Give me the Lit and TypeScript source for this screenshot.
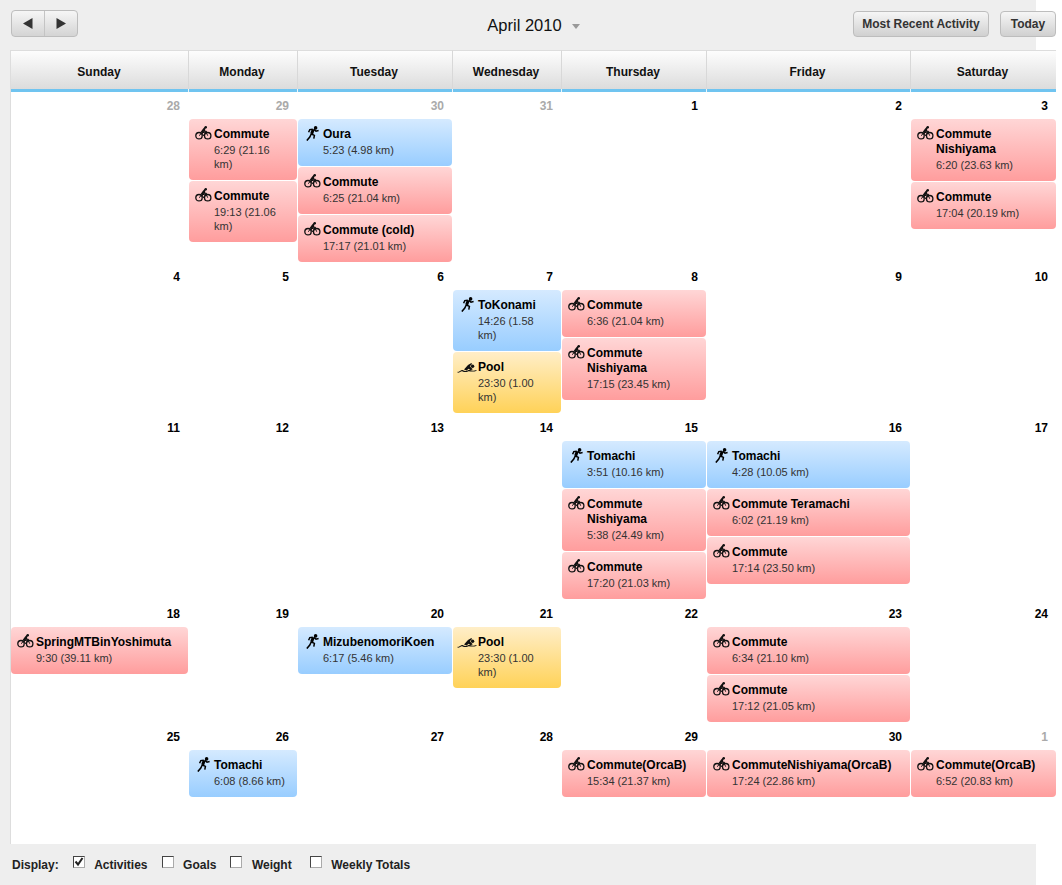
import { LitElement, html, css, svg } from "lit";
import { customElement } from "lit/decorators.js";

type Kind = "bike" | "run" | "swim";
interface Ev { k: Kind; t: string; s: string }
interface Day { n: number; off?: boolean; ev?: Ev[] }

const b = (t: string, s: string): Ev => ({ k: "bike", t, s });
const r = (t: string, s: string): Ev => ({ k: "run", t, s });
const p = (t: string, s: string): Ev => ({ k: "swim", t, s });

const WEEKS: Day[][] = [
  [
    { n: 28, off: true },
    { n: 29, off: true, ev: [b("Commute", "6:29 (21.16 km)"), b("Commute", "19:13 (21.06 km)")] },
    { n: 30, off: true, ev: [r("Oura", "5:23 (4.98 km)"), b("Commute", "6:25 (21.04 km)"), b("Commute (cold)", "17:17 (21.01 km)")] },
    { n: 31, off: true },
    { n: 1 },
    { n: 2 },
    { n: 3, ev: [b("Commute Nishiyama", "6:20 (23.63 km)"), b("Commute", "17:04 (20.19 km)")] },
  ],
  [
    { n: 4 },
    { n: 5 },
    { n: 6 },
    { n: 7, ev: [r("ToKonami", "14:26 (1.58 km)"), p("Pool", "23:30 (1.00 km)")] },
    { n: 8, ev: [b("Commute", "6:36 (21.04 km)"), b("Commute Nishiyama", "17:15 (23.45 km)")] },
    { n: 9 },
    { n: 10 },
  ],
  [
    { n: 11 },
    { n: 12 },
    { n: 13 },
    { n: 14 },
    { n: 15, ev: [r("Tomachi", "3:51 (10.16 km)"), b("Commute Nishiyama", "5:38 (24.49 km)"), b("Commute", "17:20 (21.03 km)")] },
    { n: 16, ev: [r("Tomachi", "4:28 (10.05 km)"), b("Commute Teramachi", "6:02 (21.19 km)"), b("Commute", "17:14 (23.50 km)")] },
    { n: 17 },
  ],
  [
    { n: 18, ev: [b("SpringMTBinYoshimuta", "9:30 (39.11 km)")] },
    { n: 19 },
    { n: 20, ev: [r("MizubenomoriKoen", "6:17 (5.46 km)")] },
    { n: 21, ev: [p("Pool", "23:30 (1.00 km)")] },
    { n: 22 },
    { n: 23, ev: [b("Commute", "6:34 (21.10 km)"), b("Commute", "17:12 (21.05 km)")] },
    { n: 24 },
  ],
  [
    { n: 25 },
    { n: 26, ev: [r("Tomachi", "6:08 (8.66 km)")] },
    { n: 27 },
    { n: 28 },
    { n: 29, ev: [b("Commute(OrcaB)", "15:34 (21.37 km)")] },
    { n: 30, ev: [b("CommuteNishiyama(OrcaB)", "17:24 (22.86 km)")] },
    { n: 1, off: true, ev: [b("Commute(OrcaB)", "6:52 (20.83 km)")] },
  ],
];

const DAYS = ["Sunday", "Monday", "Tuesday", "Wednesday", "Thursday", "Friday", "Saturday"];
const DISPLAY = [
  { label: "Activities", on: true },
  { label: "Goals", on: false },
  { label: "Weight", on: false },
  { label: "Weekly Totals", on: false },
];

const icons = {
  bike: svg`<svg class="ic bike" width="17" height="14" viewBox="0 0 17 14">
    <circle cx="4" cy="9.7" r="3.2" fill="none" stroke="#111" stroke-width="1.3"/>
    <circle cx="12.7" cy="9.7" r="3.2" fill="none" stroke="#111" stroke-width="1.3"/>
    <path d="M4 9.7 L7 6.8 L11 6 L12.7 9.7 M7 6.8 L8.4 9.8 L11 6" fill="none" stroke="#111" stroke-width="1"/>
    <path d="M5.6 6 L7.8 3 L10 .6 L11.4 1.2 L10.2 3 L10 4.4 L12 5 L11.8 6.1 L8.8 5.8 L7.4 7.2 Z" fill="#111"/>
    <circle cx="10.8" cy="1.2" r="1.2" fill="#111"/>
  </svg>`,
  run: svg`<svg class="ic run" width="13" height="15" viewBox="0 0 13 15">
    <circle cx="9.6" cy="1.9" r="1.8" fill="#000"/>
    <path d="M7.2 3.4 L5.6 8" fill="none" stroke="#000" stroke-width="3"/>
    <path d="M7.6 3.2 L10 5.2 L12.6 4.6 M6.8 3.2 L3.8 3.6 L2.6 6.2 M5.2 8 L3.8 11 L0.8 14.6 M5.4 8 L8.4 9.4 L7.8 12.6" fill="none" stroke="#000" stroke-width="1.5"/>
  </svg>`,
  swim: svg`<svg class="ic swim" width="20" height="10" viewBox="0 0 20 10">
    <circle cx="15.6" cy="3.2" r="1.7" fill="#111"/>
    <path d="M7 6.6 L11 2 L14.4 0 L15 1 L12.8 3.2 L15.8 6.2 L13.6 7.2 L11.6 5.8 L9.6 7.4 Z" fill="#111"/>
    <path d="M0.5 8.8 C2.5 9.4 4 6.2 6 7.2 C8 8.4 9.6 7.8 11 7.2 C13 6.6 15 8.8 19.5 7 L19.5 7.8 C15 9.6 13 7.8 11 8.4 C9 9.2 7.6 9.4 5.6 8.4 C4 7.6 2.6 10 0.5 9.6 Z" fill="#111"/>
  </svg>`,
};

@customElement("app-root")
export class AppRoot extends LitElement {
  static styles = css`
    :host {
      display: flex;
      flex-direction: column;
      width: 1062px;
      height: 885px;
      background: #fff;
      font-family: "Liberation Sans", Arial, sans-serif;
      font-size: 12px;
      color: #000;
    }
    .toolbar {
      box-sizing: border-box;
      height: 50px;
      padding: 10px 6px 0 11px;
      display: grid;
      grid-template-columns: 1fr auto 1fr;
      align-items: start;
      background: linear-gradient(to right, #eee 1036px, #fff 1036px);
    }
    .nav {
      display: inline-flex;
      justify-self: start;
      box-sizing: border-box;
      height: 27px;
      width: 67px;
      border: 1px solid #bdbdbd;
      border-radius: 4px;
      background: linear-gradient(#f6f6f6, #d4d4d4);
    }
    .nav span {
      flex: 1;
      display: flex;
      align-items: center;
      justify-content: center;
    }
    .nav span + span { border-left: 1px solid #c4c4c4; }
    .month {
      display: flex;
      align-items: center;
      gap: 10px;
      height: 31px;
      font-size: 16.5px;
      color: #111;
    }
    .caret {
      width: 0;
      height: 0;
      border-left: 4.5px solid transparent;
      border-right: 4.5px solid transparent;
      border-top: 5px solid #999;
      margin-top: 1px;
    }
    .actions {
      display: flex;
      justify-content: flex-end;
      gap: 11px;
      padding-top: 1px;
    }
    .btn {
      box-sizing: border-box;
      height: 26px;
      width: 56px;
      display: flex;
      align-items: center;
      justify-content: center;
      border: 1px solid #bdbdbd;
      border-radius: 4px;
      background: linear-gradient(#f6f6f6, #d0d0d0);
      font-weight: 700;
      color: #333;
      white-space: nowrap;
    }
    .btn.wide { width: 136px; }
    .main {
      flex: 1;
      display: flex;
      border-left: 10px solid #eee;
      min-height: 0;
    }
    .cal {
      box-sizing: border-box;
      width: 1046px;
      border-left: 1px solid #ddd;
      display: grid;
      grid-template-columns: 177px 109px 155px 109px 145px 204px 146px;
      grid-template-rows: 42px auto auto auto auto 1fr;
    }
    .head {
      position: relative;
      box-sizing: border-box;
      border-top: 1px solid #ddd;
      border-bottom: 3px solid #70c4f0;
      background: linear-gradient(#fdfdfd, #dcdcdc);
      display: flex;
      align-items: center;
      justify-content: center;
      font-weight: 700;
      padding: 3px 1px 0 0;
      color: #111;
    }
    .head + .head { border-left: 1px solid #d8d8d8; padding-right: 2px; }
    .head + .head::after {
      content: "";
      position: absolute;
      left: -1px;
      bottom: -3px;
      width: 1px;
      height: 3px;
      background: #eaf6fc;
    }
    .cell { padding-left: 1px; padding-bottom: 1px; min-width: 0; }
    .cell.first { padding-left: 0; }
    .num {
      height: 27px;
      box-sizing: border-box;
      padding: 7px 8px 0 0;
      line-height: 15px;
      text-align: right;
      font-weight: 700;
      color: #000;
    }
    .num.off { color: #aaa; }
    .ev {
      position: relative;
      box-sizing: border-box;
      margin-bottom: 1px;
      padding: 8px 10px 9px 25px;
      border-radius: 4px;
    }
    .ev:last-child { margin-bottom: 0; }
    .ev.bike { background: linear-gradient(#ffd6d6, #ff9d9d); }
    .ev.run { background: linear-gradient(#d5eaff, #98cdff); }
    .ev.swim { background: linear-gradient(#ffeec8, #ffd258); }
    .ic { position: absolute; display: block; }
    .ic.bike { left: 5.5px; top: 7px; }
    .ic.run { left: 7.5px; top: 7px; }
    .ic.swim { left: 3.5px; top: 10.5px; }
    .t { font-weight: 700; line-height: 15px; color: #000; }
    .s { margin-top: 1px; font-size: 11px; line-height: 14px; color: #333; }
    .footer {
      box-sizing: border-box;
      width: 1036px;
      height: 41px;
      flex: none;
      background: #eee;
      padding-left: 12px;
      display: flex;
      align-items: center;
      font-weight: 700;
      color: #222;
      gap: 14px;
    }
    .opt { display: flex; align-items: center; gap: 9.5px; }
    .opt.last { margin-left: 4px; }
    .box {
      box-sizing: border-box;
      width: 12px;
      height: 12px;
      margin-top: -5px;
      background: #fff;
      border: 1px solid #aaa;
      border-top-color: #444;
      border-left-color: #444;
      display: flex;
    }
  `;

  render() {
    return html`
      <div class="toolbar">
        <div class="nav">
          <span><svg width="10" height="11" viewBox="0 0 10 11"><path d="M0 5.5 L9.5 0 L9.5 11 Z" fill="#333"/></svg></span>
          <span><svg width="10" height="11" viewBox="0 0 10 11"><path d="M10 5.5 L0.5 0 L0.5 11 Z" fill="#333"/></svg></span>
        </div>
        <div class="month">April 2010<span class="caret"></span></div>
        <div class="actions">
          <div class="btn wide">Most Recent Activity</div>
          <div class="btn">Today</div>
        </div>
      </div>
      <div class="main">
        <div class="cal">
          ${DAYS.map((d) => html`<div class="head">${d}</div>`)}
          ${WEEKS.map((w) =>
            w.map(
              (d, i) => html`<div class="cell ${i === 0 ? "first" : ""}">
                <div class="num ${d.off ? "off" : ""}">${d.n}</div>
                ${(d.ev ?? []).map(
                  (e) => html`<div class="ev ${e.k}">
                    ${icons[e.k]}
                    <div class="t">${e.t}</div>
                    <div class="s">${e.s}</div>
                  </div>`
                )}
              </div>`
            )
          )}
        </div>
      </div>
      <div class="footer">
        <span>Display:</span>
        ${DISPLAY.map(
          (o, i) => html`<div class="opt ${i === 3 ? "last" : ""}">
            <span class="box" role="checkbox" aria-checked=${o.on ? "true" : "false"}>
              ${o.on
                ? html`<svg width="10" height="10" viewBox="0 0 10 10"><path d="M1.5 4.5 L4 7.5 L8.5 1" fill="none" stroke="#222" stroke-width="2"/></svg>`
                : ""}
            </span>
            <span>${o.label}</span>
          </div>`
        )}
      </div>
    `;
  }
}
